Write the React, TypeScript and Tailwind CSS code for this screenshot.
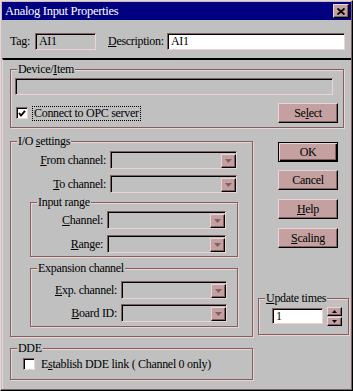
import React from "react";

const raised =
  "border border-t-[#ecd4d4] border-l-[#ecd4d4] border-r-black border-b-black shadow-[inset_-1px_-1px_0_#806060] bg-[#c4a0a0]";
const sunken =
  "border border-t-[#806060] border-l-[#806060] border-r-[#ecd4d4] border-b-[#ecd4d4] shadow-[inset_1px_1px_0_#000]";
const etched =
  "relative border border-[#806060] shadow-[1px_1px_0_#ecd4d4,inset_1px_1px_0_#ecd4d4]";

function Legend({ children }: { children: React.ReactNode }) {
  return (
    <span className="absolute left-[6px] top-[-8px] bg-[#c0c0c0] px-[1px] leading-[14px]">
      {children}
    </span>
  );
}

function Combo({ w }: { w: string }) {
  return (
    <div className={`flex h-[18px] justify-end bg-[#c0c0c0] pt-[2px] pl-[2px] ${sunken} ${w}`}>
      <div className={`flex h-full w-[15px] items-center justify-center ${raised}`}>
        <svg width="7" height="4" viewBox="0 0 7 4">
          <path d="M0 0H7L3.5 4Z" fill="#806060" />
        </svg>
      </div>
    </div>
  );
}

function Button({
  children,
  isDefault,
  className = "",
}: {
  children: React.ReactNode;
  isDefault?: boolean;
  className?: string;
}) {
  const style = isDefault
    ? "border border-black bg-[#c4a0a0] shadow-[inset_1px_1px_0_#ecd4d4,inset_-1px_-1px_0_#000,inset_-2px_-2px_0_#806060]"
    : raised;
  return (
    <button
      className={`flex h-[20px] w-[60px] items-center justify-center leading-[14px] text-black ${style} ${className}`}
    >
      {children}
    </button>
  );
}

function Row({
  label,
  labelW,
  comboW,
  className = "",
}: {
  label: React.ReactNode;
  labelW: string;
  comboW: string;
  className?: string;
}) {
  return (
    <div className={`flex items-center gap-[4px] ${className}`}>
      <span className={`text-right leading-[18px] ${labelW}`}>{label}</span>
      <Combo w={comboW} />
    </div>
  );
}

export default function App() {
  return (
    <div className="h-[391px] w-[353px] overflow-hidden bg-[#c0c0c0] font-[family-name:Liberation_Serif,serif] text-[12px] tracking-[-0.3px] text-black">
      <div className="flex h-full flex-col border border-t-[#ecd4d4] border-l-[#ecd4d4] border-r-black border-b-black p-[1px] shadow-[inset_-1px_-1px_0_#806060]">
        {/* Title bar */}
        <div className="flex h-[18px] items-center justify-between bg-[#000080] pl-[3px] pr-[2px] text-white">
          <span className="text-[12.5px] leading-[16px]">Analog Input Properties</span>
          <div className={`flex h-[14px] w-[16px] items-center justify-center ${raised}`}>
            <svg width="8" height="7" viewBox="0 0 8 7">
              <path d="M0.5 0.5L7.5 6.5M7.5 0.5L0.5 6.5" stroke="#000" strokeWidth="1.8" />
            </svg>
          </div>
        </div>

        {/* Tag / description */}
        <div className="flex h-[38px] items-start pl-[8px] pt-[13px]">
          <span className="w-[25px] leading-[17px]">Tag:</span>
          <div className={`h-[17px] w-[61px] bg-[#c0c0c0] pl-[3px] leading-[15px] ${sunken}`}>AI1</div>
          <span className="ml-[12px] w-[59px] leading-[17px]">
            <u>D</u>escription:
          </span>
          <div className={`h-[17px] w-[178px] bg-white pl-[3px] leading-[15px] ${sunken}`}>AI1</div>
        </div>

        {/* Lower panel */}
        <div className="flex-1 border-l border-t-2 border-l-[#ecd4d4] border-t-black pl-[7px] pt-[9px]">
          {/* Device/Item */}
          <div className={`h-[59px] w-[334px] pl-[4px] pt-[8px] ${etched}`}>
            <Legend>
              Device/<u>I</u>tem
            </Legend>
            <div className={`h-[17px] w-[318px] bg-[#c0c0c0] ${sunken}`} />
            <div className="mt-[8px] flex h-[20px] items-center pr-[5px]">
              <div className={`ml-[1px] flex h-[12px] w-[12px] items-center justify-center bg-white ${sunken}`}>
                <svg width="8" height="7" viewBox="0 0 8 7">
                  <path d="M1 3L3 5.5L7 0.8" stroke="#000" strokeWidth="1.8" fill="none" />
                </svg>
              </div>
              <span className="ml-[4px] border border-dotted border-black px-[1px] leading-[13px]">
                Connect to OPC server
              </span>
              <Button className="ml-auto">
                Se<u>l</u>ect
              </Button>
            </div>
          </div>

          <div className="mt-[13px] flex">
            {/* Left column */}
            <div className="w-[243px]">
              <div className={`h-[196px] pt-[9px] ${etched}`}>
                <Legend>
                  I/O <u>s</u>ettings
                </Legend>
                <Row
                  label={
                    <>
                      <u>F</u>rom channel:
                    </>
                  }
                  labelW="w-[95px]"
                  comboW="w-[127px]"
                />
                <Row
                  label={
                    <>
                      <u>T</u>o channel:
                    </>
                  }
                  labelW="w-[95px]"
                  comboW="w-[127px]"
                  className="mt-[6px]"
                />

                <div className={`ml-[19px] mt-[9px] h-[55px] w-[208px] pt-[8px] ${etched}`}>
                  <Legend>Input range</Legend>
                  <Row
                    label={
                      <>
                        <u>C</u>hannel:
                      </>
                    }
                    labelW="w-[72px]"
                    comboW="w-[119px]"
                  />
                  <Row
                    label={
                      <>
                        <u>R</u>ange:
                      </>
                    }
                    labelW="w-[72px]"
                    comboW="w-[119px]"
                    className="mt-[6px]"
                  />
                </div>

                <div className={`ml-[19px] mt-[11px] h-[59px] w-[208px] pt-[12px] ${etched}`}>
                  <Legend>Expansion channel</Legend>
                  <Row
                    label={
                      <>
                        <u>E</u>xp. channel:
                      </>
                    }
                    labelW="w-[86px]"
                    comboW="w-[106px]"
                  />
                  <Row
                    label={
                      <>
                        <u>B</u>oard ID:
                      </>
                    }
                    labelW="w-[86px]"
                    comboW="w-[106px]"
                    className="mt-[5px]"
                  />
                </div>
              </div>

              {/* DDE */}
              <div className={`mt-[11px] h-[32px] pl-[12px] pt-[7px] ${etched}`}>
                <Legend>DDE</Legend>
                <div className="flex h-[16px] items-center">
                  <div className={`h-[12px] w-[12px] bg-white ${sunken}`} />
                  <span className="ml-[6px] leading-[16px]">
                    E<u>s</u>tablish DDE link ( Channel 0 only)
                  </span>
                </div>
              </div>
            </div>

            {/* Right column */}
            <div className="ml-[5px] w-[91px]">
              <Button isDefault className="ml-[20px] mt-[1px]">
                OK
              </Button>
              <Button className="ml-[20px] mt-[8px]">Cancel</Button>
              <Button className="ml-[20px] mt-[9px]">
                <u>H</u>elp
              </Button>
              <Button className="ml-[20px] mt-[9px]">
                <u>S</u>caling
              </Button>

              <div className={`mt-[50px] h-[37px] pt-[8px] ${etched}`}>
                <Legend>
                  <u>U</u>pdate times
                </Legend>
                <div className="flex items-start">
                  <div className={`ml-[13px] mt-[1px] h-[16px] w-[51px] bg-white pl-[3px] leading-[14px] ${sunken}`}>
                    1
                  </div>
                  <div className="ml-[4px] flex flex-col gap-[1px]">
                    <div className={`flex h-[9px] w-[15px] items-center justify-center ${raised}`}>
                      <svg width="5" height="3" viewBox="0 0 5 3">
                        <path d="M2.5 0L5 3H0Z" fill="#000" />
                      </svg>
                    </div>
                    <div className={`flex h-[9px] w-[15px] items-center justify-center ${raised}`}>
                      <svg width="5" height="3" viewBox="0 0 5 3">
                        <path d="M0 0H5L2.5 3Z" fill="#000" />
                      </svg>
                    </div>
                  </div>
                </div>
              </div>
            </div>
          </div>
        </div>
      </div>
    </div>
  );
}
